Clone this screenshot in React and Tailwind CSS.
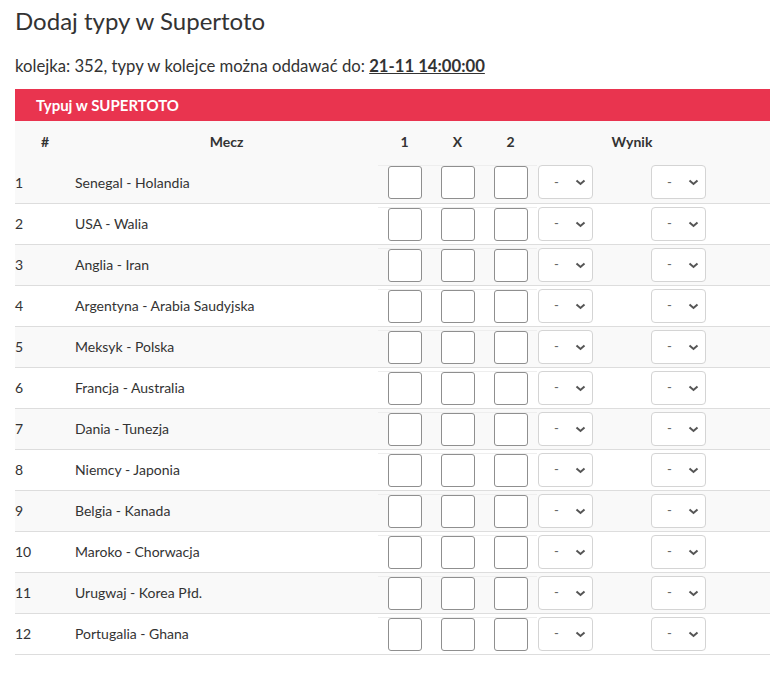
const matches = [
  "Senegal - Holandia",
  "USA - Walia",
  "Anglia - Iran",
  "Argentyna - Arabia Saudyjska",
  "Meksyk - Polska",
  "Francja - Australia",
  "Dania - Tunezja",
  "Niemcy - Japonia",
  "Belgia - Kanada",
  "Maroko - Chorwacja",
  "Urugwaj - Korea Płd.",
  "Portugalia - Ghana",
];

function Box() {
  return (
    <div className="border-t border-[#eeeeee] flex justify-center">
      <input
        type="text"
        className="w-[34px] h-[33px] border border-[#8f8f8f] rounded-[3px] bg-white"
      />
    </div>
  );
}

function ScoreSelect() {
  return (
    <div className="relative w-[55px] h-[34px]">
      <select className="appearance-none w-full h-full border border-[#d4d4d4] rounded-[4px] bg-white pl-[15px] text-[13px] text-[#666]">
        <option>-</option>
      </select>
      <svg
        className="absolute right-[7px] top-[14px] pointer-events-none"
        width="11"
        height="7"
        viewBox="0 0 11 7"
      >
        <path d="M1.5 1.5 L5.5 5 L9.5 1.5" stroke="#555" strokeWidth="2" fill="none" />
      </svg>
    </div>
  );
}

export default function App() {
  return (
    <div
      className="bg-white text-[#333] pl-[15px] pr-[10px] pb-6"
      style={{ fontFamily: "Lato, 'Open Sans', sans-serif" }}
    >
      <h1 className="text-[24px] leading-[30px] pt-[6px]">Dodaj typy w Supertoto</h1>

      <p className="text-[16.7px] leading-[24px] mt-[18px]">
        kolejka: 352, typy w kolejce można oddawać do:{" "}
        <span className="font-bold underline">21-11 14:00:00</span>
      </p>

      <div className="mt-[11px] bg-[#e9344f] h-[32px] flex items-center px-[21px]">
        <span className="text-white font-bold text-[15px]">Typuj w SUPERTOTO</span>
      </div>

      <table className="w-full table-fixed border-collapse text-[14px]">
        <colgroup>
          <col className="w-[60px]" />
          <col className="w-[303px]" />
          <col className="w-[53px]" />
          <col className="w-[53px]" />
          <col className="w-[53px]" />
          <col className="w-[104px]" />
          <col />
        </colgroup>
        <thead>
          <tr className="bg-[#f9f9f9] h-[41px]">
            <th className="font-bold text-center">#</th>
            <th className="font-bold text-center">Mecz</th>
            <th className="font-bold text-center">1</th>
            <th className="font-bold text-center">X</th>
            <th className="font-bold text-center">2</th>
            <th colSpan={2} className="font-bold text-center pr-[43px]">
              Wynik
            </th>
          </tr>
        </thead>
        <tbody>
          {matches.map((m, i) => (
            <tr
              key={m}
              className={`h-[41px] border-b border-[#dddddd] ${
                i % 2 === 0 ? "bg-[#f9f9f9]" : "bg-white"
              }`}
            >
              <td className="align-middle">{i + 1}</td>
              <td className="align-middle">{m}</td>
              <td className="align-middle py-[3px]"><Box /></td>
              <td className="align-middle py-[3px]"><Box /></td>
              <td className="align-middle py-[3px]"><Box /></td>
              <td className="align-middle pl-px">
                <ScoreSelect />
              </td>
              <td className="align-middle pl-[10px]">
                <ScoreSelect />
              </td>
            </tr>
          ))}
        </tbody>
      </table>
    </div>
  );
}
